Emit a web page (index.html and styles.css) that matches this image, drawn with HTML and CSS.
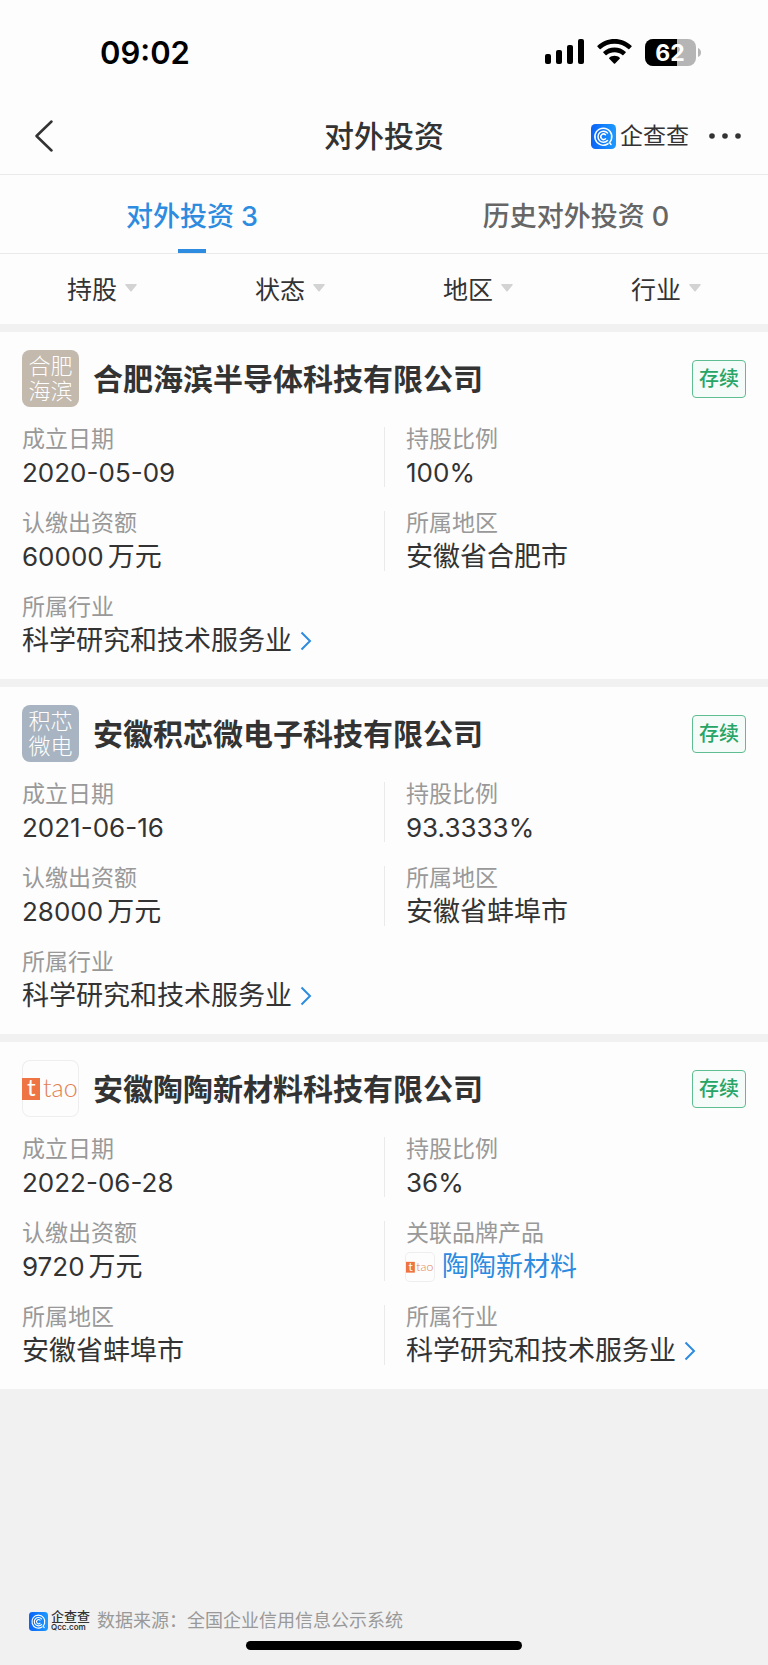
FILE: index.html
```html
<!DOCTYPE html>
<html lang="zh-CN">
  <head>
    <meta charset="UTF-8" />
    <meta name="viewport" content="width=device-width, initial-scale=1.0" />
    <title>对外投资</title>
    <link rel="stylesheet" href="styles.css">
  </head>
  <body>
    <!-- shared icons -->
    <svg class="sprite" aria-hidden="true">
      <defs>
        <linearGradient id="qcc-bg" x1="0" y1="0" x2="1" y2="0">
          <stop offset="0" stop-color="#0b63f6" />
          <stop offset="1" stop-color="#1c9bff" />
        </linearGradient>
      </defs>
      <symbol id="qcc" viewBox="0 0 50 50">
        <rect width="50" height="50" rx="9" fill="url(#qcc-bg)" />
        <g fill="none" stroke="#fff" stroke-width="3" stroke-linecap="round">
          <path d="M34 39.5A17 17 0 1 1 41 30Q40 34 37 37L40 41" />
          <path d="M33 33A11 11 0 1 1 33 18" />
          <path d="M29 29.5A5.500 5.500 0 1 1 29 21.500" />
        </g>
      </symbol>
      <symbol id="arrow" viewBox="0 0 12 20">
        <path d="M1.500 1.500L10 10L1.500 18.500" fill="none" stroke="#2d8be0" stroke-width="2" />
      </symbol>
      <symbol id="caret" viewBox="0 0 12 8">
        <path d="M1 0H11Q12.500 0 11.500 1.200L6.800 7Q6 8 5.200 7L.5 1.200Q-.5 0 1 0Z" fill="#d3d3d3" />
      </symbol>
    </svg>

    <header>
      <div class="status-bar">
        <time class="clock">09:02</time>
        <div class="status-icons">
          <svg width="39" height="26" viewBox="0 0 39 26" aria-hidden="true">
            <rect x="0" y="15" width="6" height="10" rx="2" />
            <rect x="11" y="11" width="6" height="14" rx="2" />
            <rect x="22" y="6" width="6" height="19" rx="2" />
            <rect x="33" y="0" width="6" height="25" rx="2" />
          </svg>
          <svg width="35" height="26" viewBox="0 0 35 26" aria-hidden="true">
            <path d="M17.500 0C24 0 30 2.500 34.500 6.700Q35 7.200 34.500 7.700L32.300 10Q31.800 10.500 31.300 10C27.500 6.500 22.700 4.800 17.500 4.800S7.500 6.500 3.700 10Q3.200 10.500 2.700 10L.5 7.700Q0 7.200.5 6.700C5 2.500 11 0 17.500 0Z" />
            <path d="M17.500 8.500C21.700 8.500 25.600 10 28.600 12.800Q29.200 13.300 28.600 13.800L26.400 16Q25.900 16.500 25.300 16C23.200 14.200 20.500 13.200 17.500 13.200S11.800 14.200 9.700 16Q9.100 16.500 8.600 16L6.400 13.800Q5.800 13.300 6.400 12.800C9.400 10 13.300 8.500 17.500 8.500Z" />
            <path d="M17.500 16.800C19.500 16.800 21.300 17.500 22.700 18.700Q23.300 19.300 22.700 19.800L18.100 24.500Q17.500 25 16.900 24.500L12.300 19.800Q11.700 19.300 12.300 18.700C13.700 17.500 15.500 16.800 17.500 16.800Z" />
          </svg>
          <svg class="battery" width="56" height="27" viewBox="0 0 56 27" role="img" aria-label="62%">
            <rect width="51" height="27" rx="8" fill="#b5b5b5" />
            <path d="M8 0H32V27H8A8 8 0 0 1 0 19V8A8 8 0 0 1 8 0Z" />
            <path d="M53 9Q56 10.500 56 13.500T53 18Z" fill="#b5b5b5" />
            <text x="25" y="22" text-anchor="middle">62</text>
          </svg>
        </div>
      </div>
      <nav class="nav-bar">
        <button class="back" type="button" aria-label="返回">
          <svg width="18" height="32" viewBox="0 0 18 32">
            <path d="M16.500 1.500L1.500 16L16.500 30.500" fill="none" stroke="#333" stroke-width="2.500" stroke-linecap="round" stroke-linejoin="round" />
          </svg>
        </button>
        <h1>对外投资</h1>
        <div class="nav-right">
          <a class="brand" href="#">
            <svg width="25" height="25" aria-hidden="true"><use href="#qcc" /></svg>
            <span>企查查</span>
          </a>
          <button type="button" aria-label="更多">
            <svg width="32" height="6" viewBox="0 0 32 6" fill="#333">
              <circle cx="3" cy="3" r="2.800" />
              <circle cx="16" cy="3" r="2.800" />
              <circle cx="29" cy="3" r="2.800" />
            </svg>
          </button>
        </div>
      </nav>
      <div class="tabs" role="tablist">
        <button class="tab active" type="button" role="tab" aria-selected="true">对外投资 3</button>
        <button class="tab" type="button" role="tab" aria-selected="false">历史对外投资 0</button>
      </div>
      <div class="filters">
        <button type="button" aria-haspopup="true">持股<svg width="12" height="8"><use href="#caret" /></svg></button>
        <button type="button" aria-haspopup="true">状态<svg width="12" height="8"><use href="#caret" /></svg></button>
        <button type="button" aria-haspopup="true">地区<svg width="12" height="8"><use href="#caret" /></svg></button>
        <button type="button" aria-haspopup="true">行业<svg width="12" height="8"><use href="#caret" /></svg></button>
      </div>
    </header>

    <main>
      <article class="card">
        <div class="card-head">
          <div class="logo sand">合肥<br>海滨</div>
          <h2>合肥海滨半导体科技有限公司</h2>
          <span class="state">存续</span>
        </div>
        <dl>
          <div><dt>成立日期</dt><dd class="num">2020-05-09</dd></div>
          <div><dt>持股比例</dt><dd class="num">100%</dd></div>
          <div><dt>认缴出资额</dt><dd class="num">60000<span class="unit">万元</span></dd></div>
          <div><dt>所属地区</dt><dd>安徽省合肥市</dd></div>
          <div><dt>所属行业</dt><dd><a href="#">科学研究和技术服务业<svg width="12" height="20"><use href="#arrow" /></svg></a></dd></div>
        </dl>
      </article>

      <article class="card">
        <div class="card-head">
          <div class="logo slate">积芯<br>微电</div>
          <h2>安徽积芯微电子科技有限公司</h2>
          <span class="state">存续</span>
        </div>
        <dl>
          <div><dt>成立日期</dt><dd class="num">2021-06-16</dd></div>
          <div><dt>持股比例</dt><dd class="num">93.3333%</dd></div>
          <div><dt>认缴出资额</dt><dd class="num">28000<span class="unit">万元</span></dd></div>
          <div><dt>所属地区</dt><dd>安徽省蚌埠市</dd></div>
          <div><dt>所属行业</dt><dd><a href="#">科学研究和技术服务业<svg width="12" height="20"><use href="#arrow" /></svg></a></dd></div>
        </dl>
      </article>

      <article class="card">
        <div class="card-head">
          <div class="logo framed">
            <svg width="57" height="57" viewBox="0 0 57 57">
              <rect y="18" width="18" height="22" fill="#ee7543" />
              <text x="5" y="36" class="ttao-t">t</text>
              <text x="21" y="37" class="ttao-name">tao</text>
            </svg>
          </div>
          <h2>安徽陶陶新材料科技有限公司</h2>
          <span class="state">存续</span>
        </div>
        <dl>
          <div><dt>成立日期</dt><dd class="num">2022-06-28</dd></div>
          <div><dt>持股比例</dt><dd class="num">36%</dd></div>
          <div><dt>认缴出资额</dt><dd class="num">9720<span class="unit">万元</span></dd></div>
          <div>
            <dt>关联品牌产品</dt>
            <dd>
              <a class="product" href="#">
                <svg class="mini" width="28" height="28" viewBox="0 0 57 57">
                  <rect y="18" width="18" height="22" fill="#ee7543" />
                  <text x="5" y="36" class="ttao-t">t</text>
                  <text x="21" y="37" class="ttao-name">tao</text>
                </svg>陶陶新材料
              </a>
            </dd>
          </div>
          <div><dt>所属地区</dt><dd>安徽省蚌埠市</dd></div>
          <div><dt>所属行业</dt><dd><a href="#">科学研究和技术服务业<svg width="12" height="20"><use href="#arrow" /></svg></a></dd></div>
        </dl>
      </article>
    </main>

    <footer>
      <div class="source">
        <svg width="19" height="19" aria-hidden="true"><use href="#qcc" /></svg>
        <span class="source-name">企查查<small>Qcc.com</small></span>
        <p>数据来源：全国企业信用信息公示系统</p>
      </div>
      <div class="home-indicator"></div>
    </footer>
  </body>
</html>
```
FILE: styles.css
```css
* {
  box-sizing: border-box;
}
body {
  --blue: #2d8be0;
  --text: #333;
  --line: #eaeaea;
  margin: 0;
  min-height: 100vh;
  display: flex;
  flex-direction: column;
  background-color: #f1f1f1;
  color: var(--text);
  font-family: Inter, "Noto Sans CJK SC", sans-serif;
}
h1,
h2,
p,
dl,
dd {
  margin: 0;
}
button {
  padding: 0;
  border: 0;
  background: none;
  color: inherit;
  font: inherit;
}
a {
  color: inherit;
  text-decoration: none;
}
svg {
  display: block;
  flex: none;
}
.sprite {
  position: absolute;
  width: 0;
  height: 0;
}
header {
  background-color: #fdfdfd;
}

/* status bar */
.status-bar {
  display: flex;
  justify-content: space-between;
  align-items: center;
  height: 98px;
  padding: 6px 67px 0 100px;
  color: #000;
}
.clock {
  font-size: 31px;
  font-weight: 600;
}
.status-icons {
  display: flex;
  align-items: center;
  gap: 13px;
}
.battery text {
  fill: #fff;
  font-size: 23px;
  font-weight: 700;
}

/* title bar */
.nav-bar {
  display: grid;
  grid-template-columns: 1fr auto 1fr;
  align-items: center;
  height: 77px;
  padding: 0 27px;
  border-bottom: 1px solid var(--line);
}
.back {
  justify-self: start;
  padding: 0 8px;
}
h1 {
  font-size: 30px;
  font-weight: 500;
  line-height: 40px;
}
.nav-right {
  justify-self: end;
  display: flex;
  align-items: center;
  gap: 20px;
}
.brand {
  display: flex;
  align-items: center;
  gap: 4px;
  font-size: 23px;
  line-height: 28px;
}

/* tabs and filters */
.tabs {
  display: flex;
  height: 79px;
  border-bottom: 1px solid var(--line);
}
.tab {
  flex: 1;
  position: relative;
  color: #666;
  font-size: 27px;
  font-weight: 500;
}
.tab.active {
  color: var(--blue);
}
.tab.active::after {
  content: "";
  position: absolute;
  bottom: 0;
  left: calc(50% - 14px);
  width: 28px;
  height: 4px;
  background-color: var(--blue);
}
.filters {
  display: flex;
  height: 70px;
  padding: 0 8px 2px;
}
.filters button {
  flex: 1;
  display: flex;
  justify-content: center;
  align-items: center;
  gap: 8px;
  font-size: 25px;
}

/* company cards */
main {
  display: flex;
  flex-direction: column;
  gap: 8px;
  padding-top: 8px;
}
.card {
  padding: 18px 22px 24px;
  background-color: #fdfdfd;
}
.card-head {
  display: flex;
  align-items: center;
  gap: 14px;
  margin-bottom: 20px;
}
.logo {
  flex: none;
  display: grid;
  place-content: center;
  width: 57px;
  height: 57px;
  border-radius: 8px;
  color: #fff;
  font-size: 22px;
  font-weight: 300;
  line-height: 25px;
  overflow: hidden;
}
.sand {
  background-color: #c3b9ad;
}
.slate {
  background-color: #a8b4c1;
}
.framed {
  box-shadow: inset 0 0 0 1px #eee;
}
.ttao-t,
.ttao-name {
  font-family: Lato, sans-serif;
  font-weight: 400;
}
.ttao-t {
  fill: #fff;
  font-size: 24px;
}
.ttao-name {
  fill: #e2804f;
  font-size: 25px;
  font-weight: 300;
}
h2 {
  flex: 1;
  font-size: 30px;
  font-weight: 700;
  line-height: 40px;
}
.state {
  padding: 4px 6px;
  border: 1px solid #5fbd92;
  border-radius: 4px;
  background-color: #f5fbf8;
  color: #27a567;
  font-size: 20px;
  font-weight: 500;
  line-height: 28px;
}
dl {
  display: grid;
  grid-template-columns: 1fr 1fr;
  row-gap: 24px;
}
dl > div {
  display: flex;
  flex-direction: column;
  gap: 8px;
}
dl > div:nth-child(even) {
  padding-left: 21px;
  border-left: 1px solid var(--line);
}
dt {
  color: #999;
  font-size: 23px;
  line-height: 24px;
}
dd {
  font-size: 27px;
  line-height: 28px;
}
dd a {
  display: flex;
  align-items: center;
  gap: 8px;
}
.num {
  font-size: 26px;
}
.unit {
  margin-left: 4px;
  font-size: 27px;
}
.product {
  color: var(--blue);
}
.mini {
  border-radius: 4px;
  box-shadow: 0 0 0 1px #eee;
}

/* data source */
footer {
  margin-top: auto;
  padding: 24px 29px 15px;
}
.source {
  display: flex;
  align-items: center;
  color: #999;
  font-size: 18px;
  line-height: 24px;
}
.source-name {
  display: flex;
  flex-direction: column;
  margin: 0 7px 0 3px;
  color: var(--text);
  font-size: 13px;
  font-weight: 500;
  line-height: 13px;
}
.source-name small {
  font-size: 8px;
  font-weight: 600;
  line-height: 9px;
}
.home-indicator {
  width: 39%;
  height: 9px;
  margin: 8px auto 0;
  border-radius: 5px;
  background-color: #000;
}
```
